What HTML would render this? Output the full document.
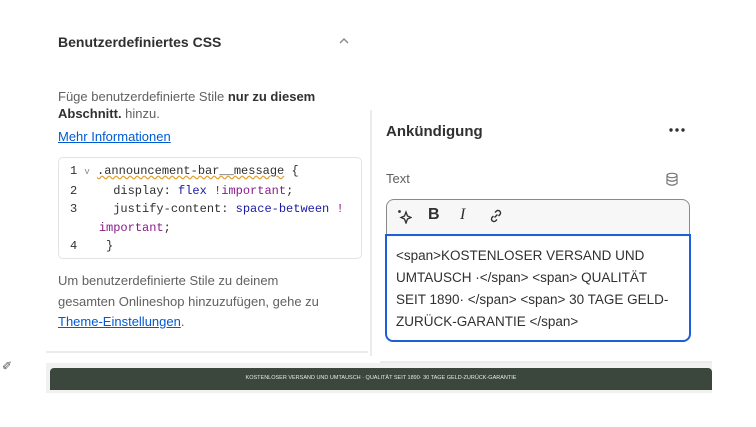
<!DOCTYPE html>
<html><head><meta charset="utf-8"><style>
*{margin:0;padding:0;box-sizing:border-box}
body{width:756px;height:427px;background:#fff;position:relative;overflow:hidden;font-family:"Liberation Sans",sans-serif;color:#303030;font-size:13px}
.a{position:absolute;white-space:nowrap}
.mono{font-family:"Liberation Mono",monospace;font-size:12px;white-space:pre}
.k{color:#1a1aa6}.i{color:#8a1a8a}
a{color:#005bd3;text-decoration:underline}
</style></head><body>
<div class="a" style="left:58px;top:34px;font-size:14px;font-weight:bold;color:#303030">Benutzerdefiniertes CSS</div>
<svg class="a" style="left:338px;top:36px" width="12" height="10"><path d="M2 7 L6 3 L10 7" stroke="#8a8a8a" stroke-width="1.4" fill="none"/></svg>
<div class="a" style="left:58px;top:88px;line-height:17px;color:#616161">Füge benutzerdefinierte Stile <b style="color:#303030">nur zu diesem</b><br><b style="color:#303030">Abschnitt.</b> hinzu.</div>
<div class="a" style="left:58px;top:129px"><a>Mehr Informationen</a></div>
<div class="a" style="left:58px;top:157px;width:304px;height:102px;border:1px solid #e3e3e3;border-radius:5px"></div>
<div class="a mono" style="left:70px;top:162px;line-height:18.5px;color:#303030"><div>1 <span style="font-size:9px;color:#888">v</span> <span style="text-decoration:underline wavy #e0a030">.announcement-bar__message</span> {</div><div>2     display: <span class="k">flex</span> <span class="i">!important</span>;</div><div>3     justify-content: <span class="k">space-between</span> <span class="i">!</span></div><div>    <span class="i">important</span>;</div><div>4    }</div></div>
<div class="a" style="left:58px;top:271px;line-height:20.5px;color:#616161">Um benutzerdefinierte Stile zu deinem<br>gesamten Onlineshop hinzuzufügen, gehe zu<br><a>Theme-Einstellungen</a>.</div>
<div class="a" style="left:46px;top:351px;width:322px;height:2px;background:#ebebeb"></div>
<div class="a" style="left:370px;top:110px;width:2px;height:246px;background:#ebebeb"></div>
<div class="a" style="left:2px;top:359px;font-size:12px;color:#555">&#x2710;</div>

<div class="a" style="left:386px;top:123px;font-size:15px;font-weight:bold;color:#303030">Ankündigung</div>
<svg class="a" style="left:668px;top:127px" width="18" height="6"><circle cx="3" cy="3" r="1.7" fill="#303030"/><circle cx="9" cy="3" r="1.7" fill="#303030"/><circle cx="15" cy="3" r="1.7" fill="#303030"/></svg>
<div class="a" style="left:386px;top:171px;color:#616161">Text</div>
<svg class="a" style="left:665px;top:172px" width="14" height="15"><ellipse cx="7" cy="3.5" rx="5" ry="2.2" fill="none" stroke="#777" stroke-width="1.2"/><path d="M2 3.5 V11.5 Q7 15 12 11.5 V3.5 M2 7.5 Q7 11 12 7.5" fill="none" stroke="#777" stroke-width="1.2"/></svg>
<div class="a" style="left:386px;top:199px;width:304px;height:38px;border:1px solid #8a8a8a;border-bottom:none;border-radius:8px 8px 0 0;background:#f7f7f7"></div>
<svg class="a" style="left:396px;top:208px" width="16" height="16"><path d="M10 4 L11.5 8 L15 9.5 L11.5 11 L10 15 L8.5 11 L5 9.5 L8.5 8 Z" fill="none" stroke="#303030" stroke-width="1.3"/><circle cx="3.5" cy="3.5" r="1.4" fill="#303030"/></svg>
<div class="a" style="left:428px;top:206px;font-size:16px;font-weight:bold;color:#303030">B</div>
<div class="a" style="left:460px;top:206px;font-size:16px;font-style:italic;font-family:'Liberation Serif',serif;color:#303030">I</div>
<svg class="a" style="left:488px;top:208px" width="16" height="16"><path d="M6.5 9.5 L9.5 6.5 M7 4.5 L8.5 3 a2.5 2.5 0 0 1 3.5 3.5 L10.5 8 M9 11.5 L7.5 13 a2.5 2.5 0 0 1 -3.5 -3.5 L5.5 8" fill="none" stroke="#303030" stroke-width="1.4"/></svg>
<div class="a" style="left:385px;top:234px;width:306px;height:108px;border:2px solid #1f5fd6;border-radius:0 0 8px 8px"></div>
<div class="a" style="left:396px;top:245px;line-height:22px;font-size:13.5px;color:#303030">&lt;span&gt;KOSTENLOSER VERSAND UND<br>UMTAUSCH ·&lt;/span&gt; &lt;span&gt; QUALITÄT<br>SEIT 1890· &lt;/span&gt; &lt;span&gt; 30 TAGE GELD-<br>ZURÜCK-GARANTIE &lt;/span&gt;</div>
<div class="a" style="left:380px;top:361px;width:332px;height:2px;background:#ebebeb"></div>

<div class="a" style="left:46px;top:363px;width:666px;height:30px;background:#f1f1f1"></div>
<div class="a" style="left:50px;top:368px;width:662px;height:22px;background:#3b463c;border-radius:4px 4px 0 0"></div>
<div class="a" style="left:50px;top:375px;width:662px;text-align:center;font-size:5.5px;color:#e8e8e8">KOSTENLOSER VERSAND UND UMTAUSCH ·  QUALITÄT SEIT 1890·   30 TAGE GELD-ZURÜCK-GARANTIE</div>
</body></html>
